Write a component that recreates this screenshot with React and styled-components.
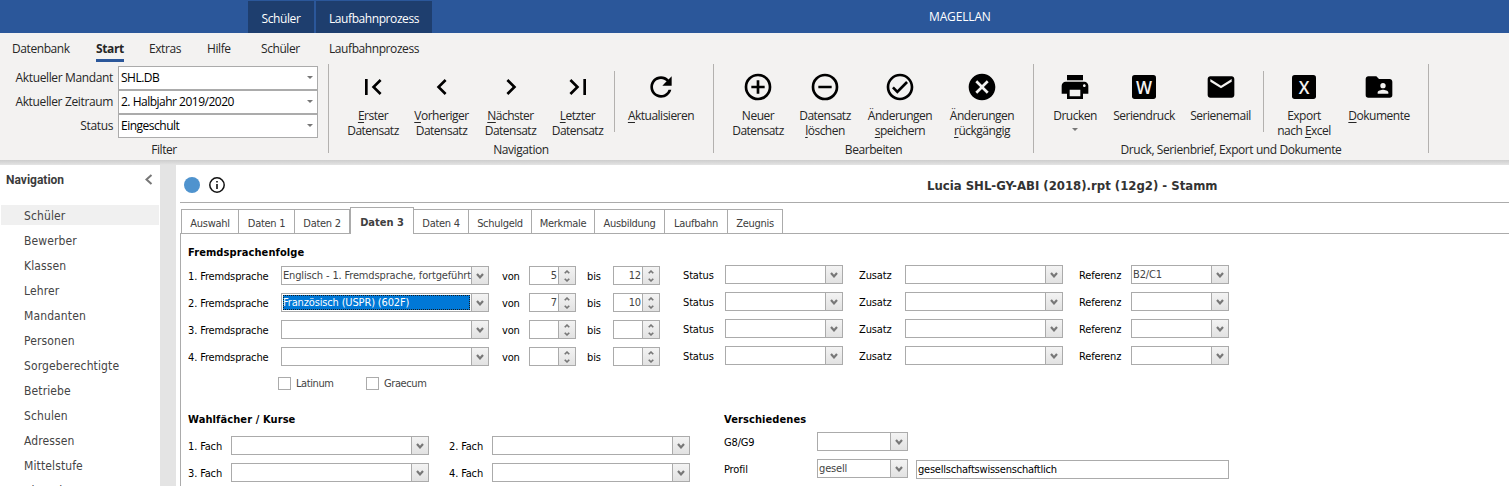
import React from "react";
import styled, { createGlobalStyle } from "styled-components";

const UI = `"Open Sans", "Noto Sans", sans-serif`;
const FORM = `"DejaVu Sans Condensed", "DejaVu Sans", sans-serif`;
const LINE = "#ababab";

const Global = createGlobalStyle`
  *, *::before { box-sizing: border-box; }
  body { margin: 0; background: #e4e4e4; overflow: hidden; }
`;

const Window = styled.div`
  width: 1509px;
  height: 486px;
  overflow: hidden;
  display: flex;
  flex-direction: column;
  font: 12px/15px ${UI};
  letter-spacing: -0.42px;
  color: #262626;
  white-space: nowrap;
`;

/* ---------- title bar ---------- */
const TitleBar = styled.header`
  height: 33px;
  flex: none;
  display: flex;
  background: #2b579a;
  color: #fff;
  padding: 1px 0 0 248px;
`;
const ContextTab = styled.div`
  width: ${(p) => p.$w}px;
  margin-right: 2px;
  background: #1e3e6e;
  text-align: center;
  line-height: 36px;
`;
const AppName = styled.div`
  margin-left: 495px;
  line-height: 31px;
  letter-spacing: -0.15px;
`;

/* ---------- ribbon ---------- */
const Ribbon = styled.section`
  height: 127px;
  flex: none;
  background: #f3f2f1;
`;
const MenuBar = styled.nav`
  height: 31px;
  display: flex;
  padding-left: 12px;
`;
const MenuItem = styled.span`
  width: ${(p) => p.$w}px;
  line-height: 32px;
`;
const ActiveMenu = styled.b`
  display: inline-block;
  width: 28px;
  height: 29px;
  border-bottom: 3px solid #2b579a;
  letter-spacing: -0.35px;
`;
const Groups = styled.div`
  display: flex;
  height: 96px;
`;
const Group = styled.div`
  width: ${(p) => p.$w}px;
  height: 89px;
  border-right: 1px solid #b3b1af;
  display: flex;
  flex-direction: column;
`;
const GroupBody = styled.div`
  height: 78px;
  flex: none;
  display: flex;
  padding-left: ${(p) => p.$pad || 0}px;
`;
const GroupTitle = styled.div`
  text-align: center;
  line-height: 16px;
`;
const FilterRows = styled.div`
  padding-top: 2px;
`;
const FilterRow = styled.label`
  display: flex;
  height: 24px;
`;
const FilterLabel = styled.span`
  width: 118px;
  padding-right: 5px;
  text-align: right;
  line-height: 24px;
  letter-spacing: -0.36px;
`;
const FilterBox = styled.span`
  width: 200px;
  height: 24px;
  border: 1px solid ${LINE};
  background: #fff;
  color: #000;
  display: flex;
  justify-content: space-between;
  align-items: center;
  padding: 0 4px 2px 2px;
  letter-spacing: -0.5px;
`;
const Arrow = styled.i`
  width: 0;
  height: 0;
  border: 3px solid transparent;
  border-top-color: #777;
  border-bottom: 0;
`;
const RibbonButton = styled.button`
  width: ${(p) => p.$w}px;
  height: 78px;
  border: 0;
  padding: 7px 0 0;
  background: none;
  font: inherit;
  letter-spacing: -0.5px;
  color: inherit;
  display: flex;
  flex-direction: column;
  align-items: center;
  line-height: 15px;
  svg { width: 32px; height: 32px; flex: none; margin-bottom: 5px; }
  ${Arrow} { margin-top: 5px; }
`;
const Splitter = styled.i`
  width: 1px;
  height: 61px;
  margin: 7px 4px 0;
  background: #b3b1af;
`;
const Key = styled.span`
  text-decoration: underline;
  text-underline-offset: 2px;
`;

const PATHS = {
  first: "M18.41 16.59L13.82 12l4.59-4.59L17 6l-6 6 6 6zM6 6h2v12H6z",
  prev: "M15.41 7.41L14 6l-6 6 6 6 1.41-1.41L10.83 12z",
  next: "M10 6L8.59 7.41 13.17 12l-4.58 4.59L10 18l6-6z",
  last: "M5.59 7.41L10.18 12l-4.59 4.59L7 18l6-6-6-6zM16 6h2v12h-2z",
  refresh:
    "M17.65 6.35C16.2 4.9 14.21 4 12 4c-4.42 0-7.99 3.58-7.99 8s3.57 8 7.99 8c3.73 0 6.84-2.55 7.73-6h-2.08c-.82 2.33-3.04 4-5.65 4-3.31 0-6-2.69-6-6s2.69-6 6-6c1.66 0 3.14.69 4.22 1.78L13 11h7V4l-2.35 2.35z",
  add: "M12 20c-4.41 0-8-3.59-8-8s3.59-8 8-8 8 3.59 8 8-3.59 8-8 8m0-18A10 10 0 0 0 2 12a10 10 0 0 0 10 10 10 10 0 0 0 10-10A10 10 0 0 0 12 2m1 5h-2v4H7v2h4v4h2v-4h4v-2h-4z",
  remove:
    "M12 20c-4.41 0-8-3.59-8-8s3.59-8 8-8 8 3.59 8 8-3.59 8-8 8m0-18A10 10 0 0 0 2 12a10 10 0 0 0 10 10 10 10 0 0 0 10-10A10 10 0 0 0 12 2M7 13h10v-2H7z",
  check:
    "M12 2C6.5 2 2 6.5 2 12s4.5 10 10 10 10-4.5 10-10S17.5 2 12 2m0 18c-4.41 0-8-3.59-8-8s3.59-8 8-8 8 3.59 8 8-3.59 8-8 8m4.59-12.42L10 14.17l-2.59-2.58L6 13l4 4 8-8z",
  cancel:
    "M12 2C6.47 2 2 6.47 2 12s4.47 10 10 10 10-4.47 10-10S17.53 2 12 2zm5 13.59L15.59 17 12 13.41 8.41 17 7 15.59 10.59 12 7 8.41 8.41 7 12 10.59 15.59 7 17 8.41 13.41 12 17 15.59z",
  print:
    "M19 8H5c-1.66 0-3 1.34-3 3v6h4v4h12v-4h4v-6c0-1.66-1.34-3-3-3zm-3 11H8v-5h8v5zm3-7c-.55 0-1-.45-1-1s.45-1 1-1 1 .45 1 1-.45 1-1 1zm-1-9H6v4h12V3z",
  mail: "M20 4H4c-1.1 0-2 .9-2 2v12c0 1.1.9 2 2 2h16c1.1 0 2-.9 2-2V6c0-1.1-.9-2-2-2zm0 4l-8 5-8-5V6l8 5 8-5v2z",
  folder:
    "M19 17h-8v-1c0-1.33 2.67-2 4-2s4 .67 4 2m-4-7a2 2 0 1 1 0 4 2 2 0 0 1 0-4m5-3h-8l-2-2H4c-1.11 0-2 .89-2 2v12a2 2 0 0 0 2 2h16a2 2 0 0 0 2-2V8c0-1.1-.9-2-2-2z",
};
const Icon = ({ name }) => (
  <svg viewBox="0 0 24 24" fill="#000" fillRule="evenodd"><path d={PATHS[name]} /></svg>
);
const LetterIcon = ({ children, w }) => (
  <svg viewBox="0 0 24 24">
    <rect x="3" y="3" width="18" height="18" rx="2" />
    <text x={12 - w / 2} y="17" textLength={w} lengthAdjust="spacingAndGlyphs" fill="#f3f2f1" fontSize="14" fontFamily="Open Sans, sans-serif" fontWeight="600" letterSpacing="0">{children}</text>
  </svg>
);

/* ---------- workspace ---------- */
const Shade = styled.div`
  height: 5px;
  flex: none;
  background: linear-gradient(#cdcdcd, #e2e2e2 90%);
`;
const Workspace = styled.main`
  flex: 1;
  min-height: 0;
  display: flex;
  gap: 16px;
  font-family: ${FORM};
  letter-spacing: 0;
`;
const Sidebar = styled.aside`
  width: 160px;
  background: #fff;
  color: #444;
`;
const SideHead = styled.div`
  height: 40px;
  display: flex;
  justify-content: space-between;
  padding: 0 7px 0 6px;
  font: bold 12px/30px Roboto, sans-serif;
  color: #3b3b3b;
  svg { width: 9px; height: 11px; margin-top: 9px; }
`;
const SideItem = styled.div`
  height: 20px;
  margin: 0 1px 5px;
  padding-left: 23px;
  line-height: 23px;
  letter-spacing: 0.12px;
  background: ${(p) => (p.$on ? "#f0f0f0" : "none")};
`;

const Main = styled.section`
  flex: 1;
  background: #fff;
  padding-left: 4px;
`;
const Head = styled.div`
  height: 38px;
  border-bottom: 1px solid ${LINE};
  display: flex;
  align-items: center;
  padding: 3px 0 0 4px;
  svg { width: 16px; height: 16px; margin-left: 9px; }
`;
const Dot = styled.i`
  width: 16px;
  height: 16px;
  border-radius: 50%;
  background: #4f93ce;
`;
const RecordTitle = styled.b`
  margin-left: 702px;
  font-size: 13px;
  color: #333;
`;
const Tabs = styled.div`
  height: 31px;
  display: flex;
  align-items: flex-end;
  border-bottom: 1px solid ${LINE};
  padding-left: 1px;
  font-size: 11px;
  color: #404040;
`;
const Tab = styled.div`
  width: ${(p) => p.$w}px;
  height: ${(p) => (p.$on ? 27 : 24)}px;
  margin-bottom: ${(p) => (p.$on ? -1 : 0)}px;
  border: 1px solid ${LINE};
  border-width: 1px 1px 0 ${(p) => (p.$first || p.$on ? 1 : 0)}px;
  background: #fff;
  text-align: center;
  line-height: ${(p) => (p.$on ? 30 : 27)}px;
  letter-spacing: ${(p) => (p.$on ? 0 : -0.3)}px;
  font-weight: ${(p) => (p.$on ? "bold" : "normal")};
`;
const Panel = styled.div`
  height: 260px;
  border-left: 1px solid ${LINE};
  padding: 9px 0 0 7px;
  font-size: 11px;
  color: #000;
  letter-spacing: -0.15px;
`;
const Heading = styled.b`
  display: block;
  height: ${(p) => p.$h}px;
  line-height: 20px;
  letter-spacing: 0.1px;
`;
const Row = styled.div`
  display: flex;
  height: ${(p) => p.$h || 27}px;
`;
const Raised = styled.div`
  display: flex;
  margin-top: -1px;
`;
const Label = styled.span`
  width: ${(p) => p.$w}px;
  padding-left: ${(p) => p.$pad || 0}px;
  line-height: 22px;
`;
const Box = styled.div`
  width: ${(p) => p.$w}px;
  height: 19px;
  border: 1px solid ${LINE};
  background: #fff;
  color: #444;
  display: flex;
`;
const Value = styled.div`
  flex: 1;
  min-width: 0;
  overflow: hidden;
  padding: 0 1px;
  line-height: 17px;
  text-align: ${(p) => (p.$right ? "right" : "left")};
  ${(p) => p.$on && `
    margin: 1px;
    padding: 0;
    line-height: 15px;
    background: #0078d7;
    color: #fff;
    outline: 1px dotted #1b1b1b;
    outline-offset: -1px;
  `}
`;
const Drop = styled.div`
  width: 17px;
  border-left: 1px solid ${LINE};
  background: linear-gradient(#f3f3f3, #e2e2e2);
  display: flex;
  flex-direction: column;
  align-items: center;
  justify-content: center;
  gap: 4px;
`;
const Plain = styled(Box)`
  margin: 1px 0 0 8px;
  padding-left: 1px;
  line-height: 17px;
  color: #000;
  letter-spacing: -0.22px;
`;
const Checks = styled.div`
  display: flex;
  padding: 3px 0 0 90px;
  height: 36px;
`;
const Check = styled.label`
  display: flex;
  width: 88px;
  color: #444;
  line-height: 14px;
  gap: 5px;
  letter-spacing: -0.4px;
  &::before { content: ""; width: 13px; height: 13px; border: 1px solid ${LINE}; }
`;
const Columns = styled.div`
  display: flex;
`;
const Column = styled.div`
  width: ${(p) => p.$w}px;
`;

const Chevron = ({ up, small }) => (
  <svg width={small ? 6 : 8} height={small ? 4 : 6} viewBox="0 0 8 6" preserveAspectRatio="none">
    <path d={up ? "M1 5L4 1.6L7 5" : "M1 1L4 4.4L7 1"} fill="none" stroke="#777" strokeWidth="2.2" />
  </svg>
);
const Combo = ({ w, value, on }) => (
  <Box $w={w}><Value $on={on}>{value}</Value><Drop><Chevron /></Drop></Box>
);
const Spin = ({ value }) => (
  <Box $w={47}>
    <Value $right>{value}</Value>
    <Drop><Chevron up small /><Chevron small /></Drop>
  </Box>
);

const languages = [
  { text: "Englisch - 1. Fremdsprache, fortgeführt", from: 5, to: 12, ref: "B2/C1" },
  { text: "Französisch (USPR) (602F)", from: 7, to: 10, on: true },
  {},
  {},
];
const tabs = [["Auswahl", 58], ["Daten 1", 56], ["Daten 2", 55], ["Daten 3", 64], ["Daten 4", 55], ["Schulgeld", 63], ["Merkmale", 63], ["Ausbildung", 70], ["Laufbahn", 63], ["Zeugnis", 55]];
const nav = ["Schüler", "Bewerber", "Klassen", "Lehrer", "Mandanten", "Personen", "Sorgeberechtigte", "Betriebe", "Schulen", "Adressen", "Mittelstufe", "Alumni"];

export default function App() {
  return (
    <Window>
      <Global />
      <TitleBar>
        <ContextTab $w={66}>Schüler</ContextTab>
        <ContextTab $w={116}>Laufbahnprozess</ContextTab>
        <AppName>MAGELLAN</AppName>
      </TitleBar>

      <Ribbon>
        <MenuBar>
          <MenuItem $w={84}>Datenbank</MenuItem>
          <MenuItem $w={53}><ActiveMenu>Start</ActiveMenu></MenuItem>
          <MenuItem $w={58}>Extras</MenuItem>
          <MenuItem $w={54}>Hilfe</MenuItem>
          <MenuItem $w={68}>Schüler</MenuItem>
          <MenuItem $w={100}>Laufbahnprozess</MenuItem>
        </MenuBar>
        <Groups>
          <Group $w={329}>
            <GroupBody>
              <FilterRows>
                {[["Aktueller Mandant", "SHL.DB"], ["Aktueller Zeitraum", "2. Halbjahr 2019/2020"], ["Status", "Eingeschult"]].map(([l, v]) => (
                  <FilterRow key={l}><FilterLabel>{l}</FilterLabel><FilterBox>{v}<Arrow /></FilterBox></FilterRow>
                ))}
              </FilterRows>
            </GroupBody>
            <GroupTitle>Filter</GroupTitle>
          </Group>
          <Group $w={385}>
            <GroupBody $pad={10}>
              <RibbonButton $w={68}><Icon name="first" /><span><Key>E</Key>rster</span><span>Datensatz</span></RibbonButton>
              <RibbonButton $w={69}><Icon name="prev" /><span><Key>V</Key>orheriger</span><span>Datensatz</span></RibbonButton>
              <RibbonButton $w={69}><Icon name="next" /><span><Key>N</Key>ächster</span><span>Datensatz</span></RibbonButton>
              <RibbonButton $w={65}><Icon name="last" /><span><Key>L</Key>etzter</span><span>Datensatz</span></RibbonButton>
              <Splitter />
              <RibbonButton $w={84}><Icon name="refresh" /><span><Key>A</Key>ktualisieren</span></RibbonButton>
            </GroupBody>
            <GroupTitle>Navigation</GroupTitle>
          </Group>
          <Group $w={320}>
            <GroupBody $pad={10}>
              <RibbonButton $w={68}><Icon name="add" /><span>Neuer</span><span>Datensatz</span></RibbonButton>
              <RibbonButton $w={66}><Icon name="remove" /><span>Datensatz</span><span><Key>l</Key>öschen</span></RibbonButton>
              <RibbonButton $w={84}><Icon name="check" /><span>Änderungen</span><span><Key>s</Key>peichern</span></RibbonButton>
              <RibbonButton $w={80}><Icon name="cancel" /><span>Änderungen</span><span><Key>r</Key>ückgängig</span></RibbonButton>
            </GroupBody>
            <GroupTitle>Bearbeiten</GroupTitle>
          </Group>
          <Group $w={395}>
            <GroupBody $pad={10}>
              <RibbonButton $w={62}><Icon name="print" /><span>Drucken</span><Arrow /></RibbonButton>
              <RibbonButton $w={76}><LetterIcon w={12}>W</LetterIcon><span>Seriendruck</span></RibbonButton>
              <RibbonButton $w={77}><Icon name="mail" /><span>Serienemail</span></RibbonButton>
              <Splitter />
              <RibbonButton $w={72}><LetterIcon w={8}>X</LetterIcon><span>Export</span><span>nach <Key>E</Key>xcel</span></RibbonButton>
              <RibbonButton $w={78}><Icon name="folder" /><span><Key>D</Key>okumente</span></RibbonButton>
            </GroupBody>
            <GroupTitle>Druck, Serienbrief, Export und Dokumente</GroupTitle>
          </Group>
        </Groups>
      </Ribbon>

      <Shade />
      <Workspace>
        <Sidebar>
          <SideHead>
            Navigation
            <svg viewBox="0 0 9 11"><path d="M7.5 1L2.5 5.5L7.5 10" fill="none" stroke="#777" strokeWidth="2" /></svg>
          </SideHead>
          {nav.map((n, i) => <SideItem key={n} $on={i === 0}>{n}</SideItem>)}
        </Sidebar>

        <Main>
          <Head>
            <Dot />
            <svg viewBox="0 0 16 16">
              <circle cx="8" cy="8" r="7.2" fill="none" stroke="#111" strokeWidth="1.5" />
              <path d="M8 7v5M8 4v1.6" stroke="#111" strokeWidth="1.6" />
            </svg>
            <RecordTitle>Lucia SHL-GY-ABI (2018).rpt (12g2) - Stamm</RecordTitle>
          </Head>
          <Tabs>
            {tabs.map(([t, w], i) => <Tab key={t} $w={w} $first={i === 0} $on={i === 3}>{t}</Tab>)}
          </Tabs>
          <Panel>
            <Heading $h={23}>Fremdsprachenfolge</Heading>
            {languages.map((l, i) => (
              <Row key={i}>
                <Label $w={93}>{i + 1}. Fremdsprache</Label>
                <Combo w={208} value={l.text} on={l.on} />
                <Label $w={40} $pad={13}>von</Label>
                <Spin value={l.from} />
                <Label $w={37} $pad={11}>bis</Label>
                <Spin value={l.to} />
                <Raised>
                  <Label $w={65} $pad={23}>Status</Label>
                  <Combo w={118} />
                  <Label $w={62} $pad={16}>Zusatz</Label>
                  <Combo w={158} />
                  <Label $w={68} $pad={16}>Referenz</Label>
                  <Combo w={98} value={l.ref} />
                </Raised>
              </Row>
            ))}
            <Checks>
              <Check>Latinum</Check>
              <Check>Graecum</Check>
            </Checks>
            <Columns>
              <Column $w={536}>
                <Heading $h={26}>Wahlfächer / Kurse</Heading>
                {[1, 3].map((n) => (
                  <Row key={n}>
                    <Label $w={43}>{n}. Fach</Label>
                    <Combo w={198} />
                    <Label $w={63} $pad={20}>{n + 1}. Fach</Label>
                    <Combo w={198} />
                  </Row>
                ))}
              </Column>
              <Column $w={520}>
                <Heading $h={22}>Verschiedenes</Heading>
                <Row><Label $w={93}>G8/G9</Label><Combo w={91} /></Row>
                <Row><Label $w={93}>Profil</Label><Combo w={91} value="gesell" /><Plain $w={313}>gesellschaftswissenschaftlich</Plain></Row>
              </Column>
            </Columns>
          </Panel>
        </Main>
      </Workspace>
    </Window>
  );
}
